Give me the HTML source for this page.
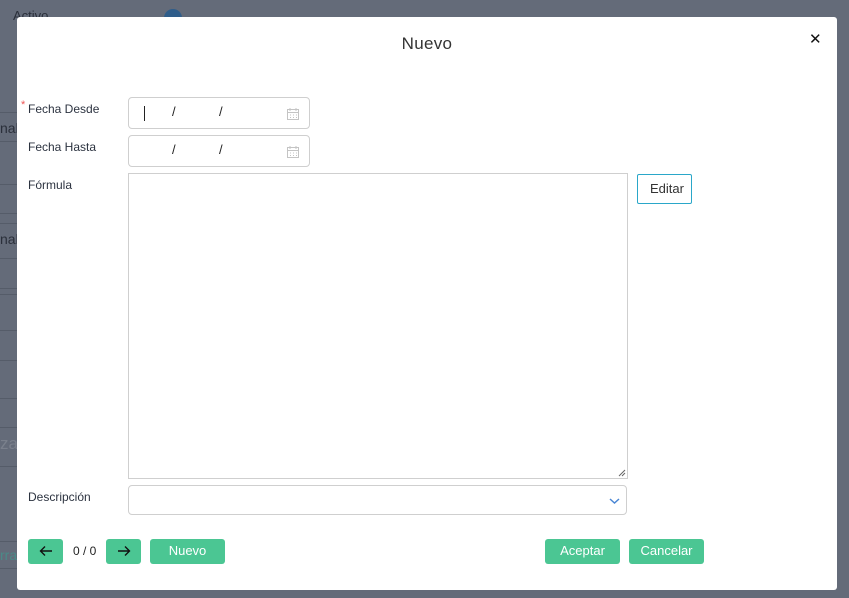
<!DOCTYPE html>
<html><head><meta charset="utf-8"><style>
*{box-sizing:border-box}
body{margin:0;width:849px;height:598px;overflow:hidden;background:#646b79;font-family:"Liberation Sans",sans-serif;position:relative}
.bg{position:absolute;color:#2a2f3a;font-size:14px}
.ln{position:absolute;left:0;width:17px;height:1px;background:#555c69}
.modal{position:absolute;left:17px;top:17px;width:820px;height:573px;background:#fff;border-radius:3px}
.t{position:absolute;left:0;width:820px;top:17px;text-align:center;font-size:17px;color:#333;letter-spacing:0.3px}
.x{position:absolute;left:792px;top:13px;font-size:15px;color:#111}
.lab{position:absolute;left:11px;font-size:12px;color:#2c3340}
.inp{position:absolute;border:1px solid #cfcfcf;border-radius:4px;background:#fff}
.sl{position:absolute;font-size:13px;color:#222;top:6px}
.btn{position:absolute;background:#4bc693;color:#fff;border-radius:3px;font-size:13px;text-align:center;height:25px;line-height:24px}
</style></head><body>
<div class="bg" style="left:13px;top:8px;font-size:13px">Activo</div>
<div style="position:absolute;left:164px;top:9px;width:18px;height:18px;border-radius:50%;background:#2f5d8a"></div>
<div class="bg" style="left:0;top:120px">nal</div>
<div class="bg" style="left:0;top:231px">nal A</div>
<div class="bg" style="left:0;top:434px;font-size:17px;color:#7a808c">za</div>
<div class="bg" style="left:0;top:547px;color:#4a8a88">rra</div>
<div class="ln" style="top:112px"></div><div class="ln" style="top:141px"></div><div class="ln" style="top:184px"></div>
<div class="ln" style="top:213px"></div><div class="ln" style="top:223px"></div><div class="ln" style="top:258px"></div>
<div class="ln" style="top:288px"></div><div class="ln" style="top:294px"></div><div class="ln" style="top:330px"></div>
<div class="ln" style="top:360px"></div><div class="ln" style="top:398px"></div><div class="ln" style="top:427px"></div>
<div class="ln" style="top:466px"></div><div class="ln" style="top:541px"></div><div class="ln" style="top:568px"></div>
<div class="modal">
<div class="t">Nuevo</div>
<div class="x">✕</div>
<div style="position:absolute;left:4px;top:82px;color:#e55;font-size:11px">*</div>
<div class="lab" style="top:85px">Fecha Desde</div>
<div class="lab" style="top:123px">Fecha Hasta</div>
<div class="lab" style="top:161px">Fórmula</div>
<div class="lab" style="top:473px">Descripción</div>
<div class="inp" style="left:111px;top:80px;width:182px;height:32px">
<div style="position:absolute;left:15px;top:8px;width:1px;height:15px;background:#222"></div>
<span class="sl" style="left:43px">/</span><span class="sl" style="left:90px">/</span>
<svg style="position:absolute;left:157px;top:9px" width="14" height="14" viewBox="0 0 14 14" fill="none" stroke="#c4c4c4"><rect x="1.5" y="2.5" width="11" height="10"/><path d="M1.5 5.5h11M4 1v3M10 1v3M4 8h1M7 8h1M10 8h1M4 10.5h1M7 10.5h1M10 10.5h1"/></svg>
</div>
<div class="inp" style="left:111px;top:118px;width:182px;height:32px">
<span class="sl" style="left:43px">/</span><span class="sl" style="left:90px">/</span>
<svg style="position:absolute;left:157px;top:9px" width="14" height="14" viewBox="0 0 14 14" fill="none" stroke="#c4c4c4"><rect x="1.5" y="2.5" width="11" height="10"/><path d="M1.5 5.5h11M4 1v3M10 1v3M4 8h1M7 8h1M10 8h1M4 10.5h1M7 10.5h1M10 10.5h1"/></svg>
</div>
<div class="inp" style="left:111px;top:156px;width:500px;height:306px;border-radius:0">
<svg style="position:absolute;right:1px;bottom:1px" width="8" height="8"><path d="M1 7L7 1M4 7L7 4" stroke="#666"/></svg>
</div>
<div style="position:absolute;left:620px;top:157px;width:55px;height:30px;border:1px solid #2aa7c9;border-radius:2px;font-size:13px;color:#333;line-height:28px;padding-left:12px">Editar</div>
<div class="inp" style="left:111px;top:468px;width:499px;height:30px">
<svg style="position:absolute;left:480px;top:11px" width="12" height="8"><path d="M1 2l4.5 4L10 2" stroke="#4a86d4" stroke-width="1.5" fill="none"/></svg>
</div>
<div class="btn" style="left:11px;top:522px;width:35px"><svg width="14" height="12" style="margin-top:6px"><path d="M13 6H2M6 1.5L1.5 6 6 10.5" stroke="#111" stroke-width="1.4" fill="none"/></svg></div>
<div style="position:absolute;left:56px;top:527px;font-size:12px;color:#222">0 / 0</div>
<div class="btn" style="left:89px;top:522px;width:35px"><svg width="14" height="12" style="margin-top:6px"><path d="M1 6h11M8 1.5L12.5 6 8 10.5" stroke="#111" stroke-width="1.4" fill="none"/></svg></div>
<div class="btn" style="left:133px;top:522px;width:75px">Nuevo</div>
<div class="btn" style="left:528px;top:522px;width:75px">Aceptar</div>
<div class="btn" style="left:612px;top:522px;width:75px">Cancelar</div>
</div>
</body></html>
